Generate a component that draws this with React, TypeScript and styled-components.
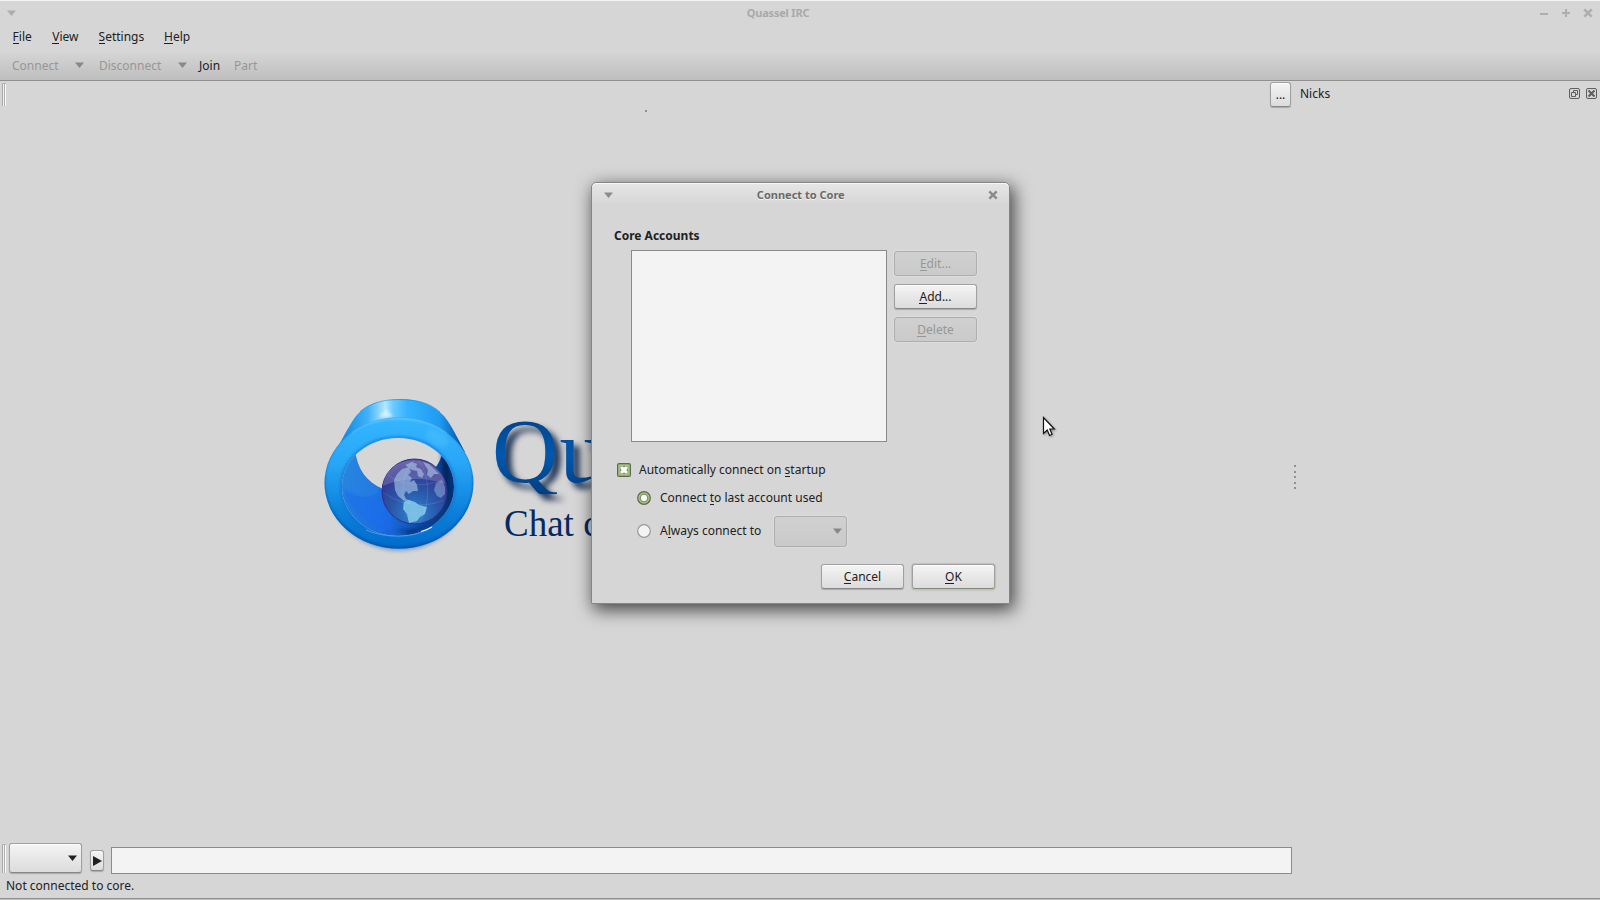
import React from "react";
import styled, { createGlobalStyle, css } from "styled-components";

const Global = createGlobalStyle`
  * { box-sizing: border-box; }
  body { margin: 0; background: #d6d6d6; overflow: hidden; }
`;

const Desktop = styled.div`
  position: relative;
  width: 1600px;
  height: 900px;
  display: flex;
  flex-direction: column;
  background: #d6d6d6;
  color: #212121;
  font: 12px/16px "Noto Sans", "Liberation Sans", sans-serif;
  border-top: 1px solid #f4f4f4;
  overflow: hidden;
`;

const Chrome = styled.header`
  height: 80px;
  flex: none;
  display: flex;
  flex-direction: column;
  background: linear-gradient(#d6d6d6 0, #d6d6d6 50px, #bebebe 79px);
  border-bottom: 1px solid #8f8f8f;
`;

const TitleBar = styled.div`
  height: 24px;
  display: grid;
  grid-template-columns: 24px 1fr 68px;
  align-items: center;
  padding: 0 7px 0 7px;
  svg { display: block; }
`;

const Title = styled.div<{ $active?: boolean }>`
  text-align: center;
  font-weight: 700;
  font-size: 11px;
  letter-spacing: ${(p) => (p.$active ? "0" : "-0.2px")};
  color: ${(p) => (p.$active ? "#696969" : "#a9a9a9")};
  text-shadow: ${(p) => (p.$active ? "0 1px 0 #f4f4f4" : "none")};
`;

const WindowButtons = styled.div`
  display: flex;
  justify-content: flex-end;
  gap: 12.5px;
`;

const MenuBar = styled.nav`
  display: flex;
  height: 24px;
  padding-left: 12.6px;
`;

const MenuItem = styled.div<{ $w: number }>`
  width: ${(p) => p.$w}px;
  line-height: 24px;
`;

const ToolBar = styled.div`
  display: flex;
  height: 31px;
  padding-left: 12px;
  line-height: 33px;
  svg { margin: 13px 0 0 0; }
`;

const Tool = styled.div<{ $w: number; $off?: boolean }>`
  width: ${(p) => p.$w}px;
  color: ${(p) => (p.$off ? "#979797" : "#212121")};
`;

const Key = styled.span`
  position: relative;
  &::after {
    content: "";
    position: absolute;
    left: 0;
    right: 0;
    bottom: 1px;
    height: 1px;
    background: currentColor;
  }
`;

const DockRow = styled.div`
  height: 30px;
  flex: none;
  display: flex;
  align-items: flex-start;
  padding: 1px 3px 0 2px;
`;

const Grip = styled.div<{ $h: number }>`
  width: 4px;
  height: ${(p) => p.$h}px;
  margin-top: 1px;
  flex: none;
  border-top: 1px solid #b4b4b4;
  background: linear-gradient(90deg, #a9a9a9 1px, #f0f0f0 1px 2px, #b0b0b0 2px 3px, #fafafa 3px);
`;

const raised = css`
  background: linear-gradient(#f4f4f4, #dcdcdc);
  border: 1px solid #a0a0a0;
  border-bottom-color: #878787;
  box-shadow: 0 1px 1px rgba(0, 0, 0, 0.22), inset 0 1px 0 #fcfcfc;
`;

const flat = css`
  background: linear-gradient(#d0d0d0, #cacaca);
  border: 1px solid #aeaeae;
  box-shadow: 0 0 0 1px rgba(255, 255, 255, 0.16);
  color: #979797;
`;

const Button = styled.button<{ $off?: boolean; $focus?: boolean; $w?: number; $h?: number }>`
  width: ${(p) => p.$w ?? 83}px;
  height: ${(p) => p.$h ?? 25}px;
  flex: none;
  display: flex;
  align-items: center;
  justify-content: center;
  padding: 0;
  border-radius: 3px;
  font: inherit;
  color: #212121;
  ${(p) => (p.$off ? flat : raised)}
  ${(p) => p.$focus && css`box-shadow: 0 0 0 1px #b5cba0, 0 1px 2px #9ab383, inset 0 1px 0 #fcfcfc;`}
`;

const Combo = styled(Button)`
  justify-content: flex-end;
  padding-right: 4px;
  && svg { margin: 0; }
`;

const InputCombo = styled(Combo)`
  margin-left: 3px;
`;

const MoreButton = styled(Button)`
  margin-left: 1264px;
  padding-top: 1px;
`;

const DockTitle = styled.div`
  flex: 1;
  margin-left: 9px;
  line-height: 24px;
`;

const DockIcons = styled.div`
  display: flex;
  gap: 6px;
  margin-top: 6px;
`;

const Workspace = styled.main`
  flex: 1;
  min-height: 0;
  display: flex;
  justify-content: space-between;
  padding-right: 304px;
`;

const Brand = styled.section`
  display: flex;
  align-items: flex-start;
  padding: 281px 0 0 318px;
`;

const Words = styled.div`
  display: flex;
  flex-direction: column;
  margin: 16px 0 0 9px;
  white-space: nowrap;
  font-family: "Liberation Serif", serif;
`;

const BigWord = styled.div`
  height: 86px;
  font-size: 92px;
  line-height: 86px;
  letter-spacing: 1px;
  color: transparent;
  background: linear-gradient(#02468f 15%, #0058ae 55%, #003f80);
  background-clip: text;
  filter: drop-shadow(6px 6px 3px rgba(0, 25, 65, 0.9));
`;

const Slogan = styled.div`
  margin: 10px 0 0 12px;
  font-size: 37px;
  line-height: 40px;
  color: #062a60;
`;

const SplitHandle = styled.div`
  display: flex;
  flex-direction: column;
  gap: 3.5px;
  margin-top: 354px;
`;

const SplitDot = styled.i`
  width: 2px;
  height: 2px;
  background: #8f8f8f;
`;

const InputRow = styled.div`
  height: 37px;
  flex: none;
  display: flex;
  align-items: flex-start;
  padding: 0 308px 0 2px;
`;

const SendButton = styled(Button)`
  margin: 7px 7px 0 8px;
`;

const Line = styled.div`
  flex: 1;
  height: 27px;
  margin-top: 4px;
  border: 1px solid #8b8b8b;
  background: #f3f3f3;
`;

const Status = styled.footer`
  height: 20px;
  flex: none;
  padding-left: 6px;
  line-height: 12px;
  border-bottom: 1px solid #c3c3c3;
  box-shadow: inset 0 -1px 0 #8f8f8f;
`;

const Dialog = styled.section`
  position: absolute;
  left: 591px;
  top: 181px;
  width: 419px;
  height: 422px;
  border: 1px solid #858585;
  border-radius: 5px 5px 0 0;
  background: linear-gradient(#e6e6e6, #d6d6d6 22px);
  box-shadow: inset 0 1px 0 #f8f8f8, 3px 5px 17px 1px rgba(0, 0, 0, 0.68);
  display: flex;
  flex-direction: column;
`;

const DialogTitle = styled(TitleBar)`
  grid-template-columns: 20px 1fr 20px;
  padding: 0 11px 0 11.5px;
`;

const Body = styled.div`
  flex: 1;
  display: flex;
  flex-direction: column;
  padding: 21px 14px 0 22px;
`;

const Heading = styled.div`
  font-weight: 700;
  line-height: 16px;
`;

const Accounts = styled.div`
  display: flex;
  gap: 7px;
  margin: 6px 0 0 17px;
`;

const List = styled.div`
  width: 256px;
  height: 192px;
  border: 1px solid #8b8b8b;
  background: #f3f3f3;
`;

const Actions = styled.div`
  display: flex;
  flex-direction: column;
  gap: 8px;
  padding-top: 1px;
`;

const Option = styled.label<{ $indent?: boolean; $top: number }>`
  display: flex;
  align-items: center;
  height: 16px;
  margin: ${(p) => p.$top}px 0 0 ${(p) => (p.$indent ? 23 : 3)}px;
  svg { margin-right: ${(p) => (p.$indent ? 9 : 8)}px; flex: none; }
`;

const ComboSlot = styled.div`
  margin-left: 13px;
`;

const Footer = styled.div`
  display: flex;
  justify-content: flex-end;
  gap: 8px;
  margin-top: 25px;
`;

const Pointer = styled.svg`
  position: absolute;
  left: 1041px;
  top: 414px;
  filter: drop-shadow(1px 1px 1px rgba(0, 0, 0, 0.35));
`;

const Speck = styled.i`
  position: absolute;
  left: 645px;
  top: 109px;
  width: 2px;
  height: 2px;
  background: #8f8f8f;
`;

const Arrow = ({ color, w = 9 }: { color: string; w?: number }) => (
  <svg width={w} height="6" viewBox="0 0 9 6"><path d="M0 0.5H9L4.5 6Z" fill={color} /></svg>
);

const Cross = ({ color }: { color: string }) => (
  <svg width="10" height="10" viewBox="0 0 10 10"><path d="M1.3 1.3 8.7 8.7M8.7 1.3 1.3 8.7" stroke={color} strokeWidth="2.5" /></svg>
);

const Logo = () => (
  <svg width="165" height="165" viewBox="318 392 165 165">
    <defs>
      <linearGradient id="tube" x1="345" x2="460" y1="0" y2="0" gradientUnits="userSpaceOnUse">
        <stop offset="0" stopColor="#168de2" /><stop offset=".2" stopColor="#3fb2fb" />
        <stop offset=".35" stopColor="#b4e8ff" /><stop offset=".42" stopColor="#6ccaff" />
        <stop offset=".54" stopColor="#35b2ff" /><stop offset=".82" stopColor="#1f9cf2" />
        <stop offset="1" stopColor="#055ab0" />
      </linearGradient>
      <linearGradient id="ring" x1="0" x2="0" y1="417" y2="549" gradientUnits="userSpaceOnUse">
        <stop offset="0" stopColor="#35b6ff" /><stop offset=".35" stopColor="#28a6f7" />
        <stop offset=".7" stopColor="#0c82dc" /><stop offset="1" stopColor="#006bcb" />
      </linearGradient>
      <linearGradient id="inside" x1="345" x2="455" y1="480" y2="500" gradientUnits="userSpaceOnUse">
        <stop offset="0" stopColor="#2480dc" /><stop offset=".4" stopColor="#1c6de2" />
        <stop offset=".75" stopColor="#0b4fae" /><stop offset="1" stopColor="#032f6d" />
      </linearGradient>
      <radialGradient id="globe" cx=".5" cy=".85" r=".85">
        <stop offset="0" stopColor="#2d86d0" /><stop offset=".45" stopColor="#2a55a8" />
        <stop offset=".8" stopColor="#33388f" /><stop offset="1" stopColor="#544f9c" />
      </radialGradient>
      <filter id="soft" x="-20%" y="-20%" width="140%" height="140%"><feGaussianBlur stdDeviation="2.2" /></filter>
      <filter id="edge" x="-10%" y="-10%" width="120%" height="120%"><feGaussianBlur stdDeviation="0.9" /></filter>
      <clipPath id="hole"><ellipse cx="398" cy="487" rx="56" ry="49" /></clipPath>
      <clipPath id="outer"><ellipse cx="399" cy="483" rx="74.500" ry="65.700" /></clipPath>
    </defs>
    <ellipse cx="399" cy="492" rx="67" ry="58.500" fill="#2a63b5" opacity=".55" filter="url(#soft)" />
    <path d="M335 452C345 434 350 424 356 416C366 404 382 399 400 399C420 399 435 406 444 416C452 426 457 437 465 452L399 480Z" fill="url(#tube)" />
    <path d="M360 411.500C371 402.500 384 399.500 400 399.500C416 399.500 430 403 440 412" fill="none" stroke="#0b84dc" strokeWidth=".8" opacity=".7" />
    <ellipse cx="399" cy="483" rx="74.500" ry="65.700" fill="url(#ring)" />
    <g clipPath="url(#outer)">
      <path d="M351 432C364 423 380 418.500 399 418.500C418 418.500 434 423 447 432" fill="none" stroke="#8ddaff" strokeWidth="1.600" opacity=".8" filter="url(#edge)" />
      <ellipse cx="399" cy="481.500" rx="75" ry="66" fill="none" stroke="#06458f" strokeWidth="2.200" opacity=".55" filter="url(#edge)" />
      <ellipse cx="437" cy="438" rx="13" ry="7" transform="rotate(32 437 438)" fill="#6fd0ff" opacity=".25" filter="url(#soft)" />
    </g>
    <path d="M379 416.500 386 409 393 416.500Z" fill="#dff6ff" opacity=".7" filter="url(#edge)" />
    <ellipse cx="398" cy="487" rx="57" ry="50" fill="none" stroke="#1670cf" strokeWidth="2" opacity=".7" filter="url(#edge)" />
    <ellipse cx="398" cy="487" rx="56" ry="49" fill="#d6d6d6" />
    <g clipPath="url(#hole)">
      <path d="M355 450C357 468 366 482 383 489C408 492 438 476 442.500 452H460V540H338V450Z" fill="url(#inside)" />
      <path d="M338 450H355C357 468 366 482 379 488C378 496 365 500 343 494Z" fill="#2f8fe8" opacity=".3" />
      <path d="M343 488C360 499 377 501 392 497V530C372 526 350 514 343 488Z" fill="#1f6cf0" opacity=".5" filter="url(#edge)" />
      <path d="M442 450C440 475 450 495 442 510C429 527 411 533 395 530L410 534C434 526 448 508 449 486L450 455Z" fill="#021f4f" opacity=".8" filter="url(#soft)" />
      <path d="M344 466A56 49 0 0 0 452 508" fill="none" stroke="#1458ad" strokeWidth="2.500" opacity=".5" filter="url(#edge)" />
    </g>
    <path d="M366 530C388 538.500 410 538 428 529.500" fill="none" stroke="#5fb0f8" strokeWidth="1" opacity=".7" />
    <path d="M421 531.500Q427 530 432 527" fill="none" stroke="#dff3ff" strokeWidth="1.200" />
    <circle cx="414.500" cy="491.500" r="32.500" fill="url(#globe)" stroke="#302f8c" strokeWidth="1" />
    <path d="M383 486C386 468 399 460.500 414 460.500C430 460.500 442 470 445.500 484C430 478 405 476 383 486Z" fill="#b3a8d4" opacity=".3" />
    <g fill="#a9c6e6" opacity=".62">
      <path d="M394 480 397 474 402 469 409 467 411 472 408 475 412 478 410 482 414 480 417 485 418 491 413 491 409 494 406 491 404 495 406 499 411 501 409 504 403 500 398 496 395 490Z" />
      <path d="M405 465 412 462 417 464 416 467 421 469 424 474 422 478 418 476 417 471 412 470Z" />
      <path d="M423 462 429 464 434 469 439 474 434 474 431 478 427 475 428 470Z" />
      <path d="M436 483 442 480 445 487 445 494 441 498 437 496 434 490Z" opacity=".7" />
    </g>
    <path d="M404 502 409 500 415 502 419 505 427 507 425 514 420 517 417 521 409 523 407 514 403 509Z" fill="#83c5e8" opacity=".9" />
    <path d="M385 493C397 504 426 509 443 500M388 475C402 486 427 488 443 479M414 460C399 475 400 508 411 523M418 460C431 476 430 505 420 522" fill="none" stroke="#bad6f5" strokeWidth=".5" opacity=".3" />
  </svg>
);

const Radio = ({ on }: { on?: boolean }) => (
  <svg width="14" height="14" viewBox="0 0 14 14">
    <circle cx="7" cy="7" r="6.300" fill={on ? "#a3c37d" : "#f3f3f3"} stroke={on ? "#5d6950" : "#999"} strokeWidth="1.200" />
    {on && <circle cx="7" cy="7" r="3.800" fill="#fafafa" stroke="#71895a" />}
  </svg>
);

export default function App() {
  return (
    <Desktop>
      <Global />
      <Chrome>
        <TitleBar>
          <Arrow color="#adadad" />
          <Title>Quassel IRC</Title>
          <WindowButtons>
            <svg width="9" height="10"><path d="M0 6H8" stroke="#aeaeae" strokeWidth="2" /></svg>
            <svg width="9" height="10"><path d="M0 5H8M4 1V9" stroke="#aeaeae" strokeWidth="2" /></svg>
            <Cross color="#aeaeae" />
          </WindowButtons>
        </TitleBar>
        <MenuBar>
          <MenuItem $w={39.6}><Key>F</Key>ile</MenuItem>
          <MenuItem $w={46.4}><Key>V</Key>iew</MenuItem>
          <MenuItem $w={65.4}><Key>S</Key>ettings</MenuItem>
          <MenuItem $w={40}><Key>H</Key>elp</MenuItem>
        </MenuBar>
        <ToolBar>
          <Tool $w={63} $off>Connect</Tool>
          <Arrow color="#888" />
          <Tool $w={15} />
          <Tool $w={79} $off>Disconnect</Tool>
          <Arrow color="#888" />
          <Tool $w={12} />
          <Tool $w={35}>Join</Tool>
          <Tool $w={40} $off>Part</Tool>
        </ToolBar>
      </Chrome>
      <DockRow>
        <Grip $h={23} />
        <MoreButton $w={21} $h={25}>...</MoreButton>
        <DockTitle>Nicks</DockTitle>
        <DockIcons>
          <svg width="11" height="11" fill="none" stroke="#5f5f5f"><rect x=".5" y=".5" width="10" height="10" rx="1.500" /><path d="M4.500 4.500V2.500H8.500V6.500H6.500M2.500 4.500H6.500V8.500H2.500Z" /></svg>
          <svg width="11" height="11" fill="none" stroke="#5f5f5f"><rect x=".5" y=".5" width="10" height="10" rx="1.500" /><path d="M2.500 2.500 8.500 8.500M8.500 2.500 2.500 8.500" strokeWidth="2" /></svg>
        </DockIcons>
      </DockRow>
      <Workspace>
        <Brand>
          <Logo />
          <Words>
            <BigWord>Qu</BigWord>
            <Slogan>Chat c</Slogan>
          </Words>
        </Brand>
        <SplitHandle>
          {[0, 1, 2, 3, 4].map((n) => <SplitDot key={n} />)}
        </SplitHandle>
      </Workspace>
      <InputRow>
        <Grip $h={29} />
        <InputCombo as="div" $w={73} $h={30}><Arrow color="#212121" /></InputCombo>
        <SendButton $w={14} $h={21}><svg width="9" height="10"><path d="M0 0 9 5 0 10Z" fill="#212121" /></svg></SendButton>
        <Line />
      </InputRow>
      <Status>Not connected to core.</Status>
      <Speck />
      <Dialog>
        <DialogTitle>
          <Arrow color="#8b8b8b" />
          <Title $active>Connect to Core</Title>
          <WindowButtons><Cross color="#8b8b8b" /></WindowButtons>
        </DialogTitle>
        <Body>
          <Heading>Core Accounts</Heading>
          <Accounts>
            <List />
            <Actions>
              <Button $off><span><Key>E</Key>dit...</span></Button>
              <Button><span><Key>A</Key>dd...</span></Button>
              <Button $off><span><Key>D</Key>elete</span></Button>
            </Actions>
          </Accounts>
          <Option $top={20}>
            <svg width="14" height="14"><rect x=".6" y=".6" width="12.800" height="12.800" rx="1.500" fill="#a3c37d" stroke="#5d6950" strokeWidth="1.200" /><path d="M3 3H11V11H3Z" fill="#71895a" /><path d="M3.500 3.500H6L7 4.800 8 3.500H10.500V6L9.200 7 10.500 8V10.500H8L7 9.200 6 10.500H3.500V8L4.800 7 3.500 6Z" fill="#fff" /></svg>
            <span>Automatically connect on <Key>s</Key>tartup</span>
          </Option>
          <Option $top={12} $indent><Radio on /><span>Connect <Key>t</Key>o last account used</span></Option>
          <Option $top={17} $indent><Radio /><span>A<Key>l</Key>ways connect to</span>
            <ComboSlot><Combo as="div" $off $w={73} $h={31}><Arrow color="#888" /></Combo></ComboSlot>
          </Option>
          <Footer>
            <Button><span><Key>C</Key>ancel</span></Button>
            <Button $focus><span><Key>O</Key>K</span></Button>
          </Footer>
        </Body>
      </Dialog>
      <Pointer width="18" height="24"><path d="M2.500 2.500V18.500L6.300 15 8.500 20.500 11 19.300 8.800 14H13.300Z" fill="#fff" stroke="#111" strokeWidth="1.200" /></Pointer>
    </Desktop>
  );
}
